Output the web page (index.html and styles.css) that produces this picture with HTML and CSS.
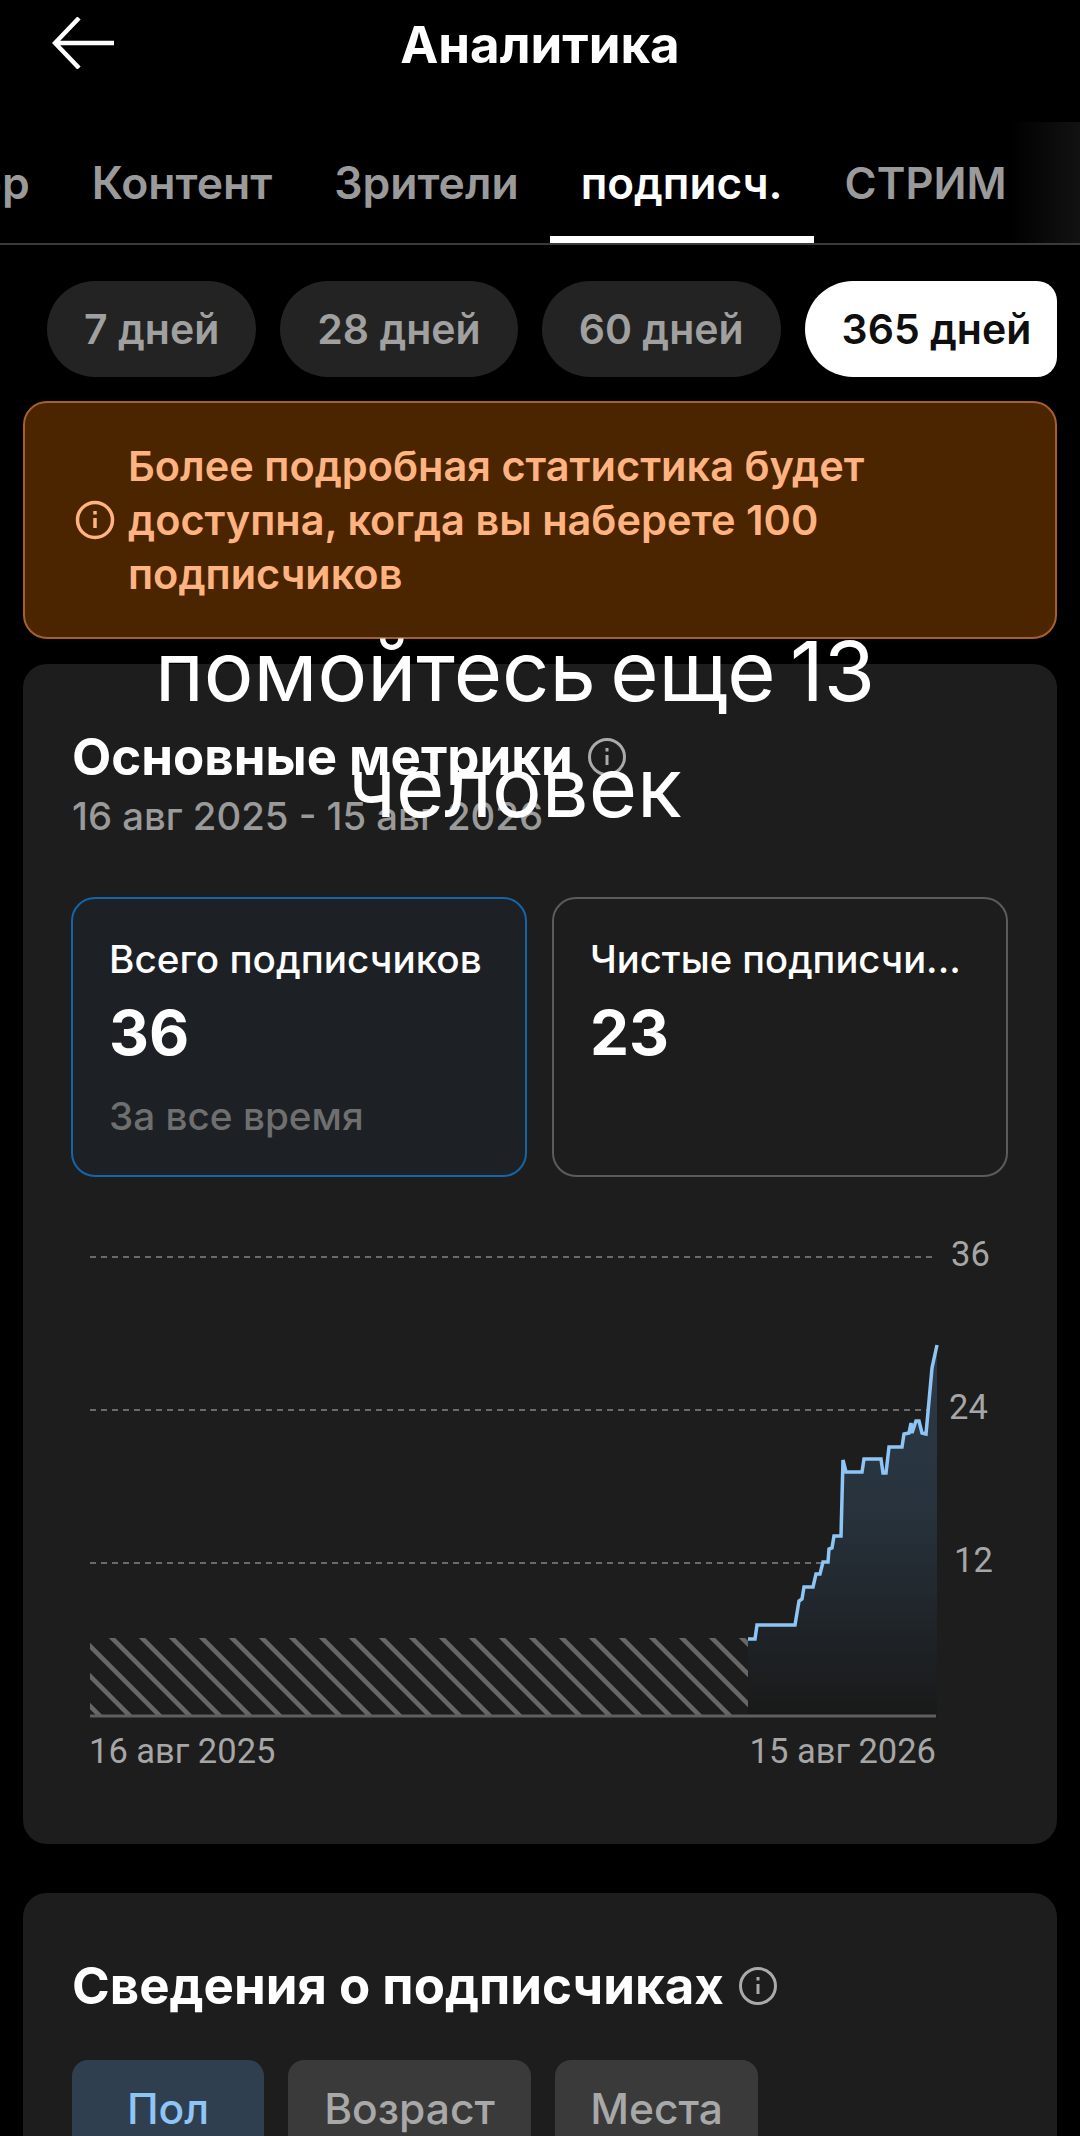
FILE: index.html
```html
<!DOCTYPE html>
<html lang="ru">
<head>
<meta charset="utf-8">
<title>Аналитика</title>
<link rel="stylesheet" href="styles.css">
</head>
<body>
<div class="page">
  <header class="topbar">
    <svg class="back" viewBox="0 0 64 52" width="64" height="52" aria-hidden="true"><path d="M62 26H3M27 1 3 26l24 25" fill="none" stroke="#fff" stroke-width="4.5"/></svg>
    <h1 class="title">Аналитика</h1>
  </header>
  <nav class="tabs">
    <span class="tab">Обзор</span>
    <span class="tab">Контент</span>
    <span class="tab">Зрители</span>
    <span class="tab tab-on">подписч.</span>
    <span class="tab tab-caps">СТРИМ</span>
    <span class="tabs-fade"></span>
  </nav>
  <div class="pills">
    <span class="pill">7 дней</span>
    <span class="pill">28 дней</span>
    <span class="pill">60 дней</span>
    <span class="pill pill-on">365 дней</span>
  </div>
  <section class="banner">
    <svg class="info info-orange" viewBox="0 0 40 40" width="40" height="40" aria-hidden="true"><circle cx="20" cy="20" r="17.5"/><path d="M20 18v10M20 11v3.5"/></svg>
    <p class="banner-text">Более подробная статистика будет доступна, когда вы наберете 100 подписчиков</p>
  </section>
  <section class="card card-metrics">
    <div class="heading">
      <h2 class="h2">Основные метрики</h2>
      <svg class="info info-gray" viewBox="0 0 40 40" width="40" height="40" aria-hidden="true"><circle cx="20" cy="20" r="17.5"/><path d="M20 18v10M20 11v3.5"/></svg>
    </div>
    <p class="range">16 авг 2025 - 15 авг 2026</p>
    <div class="metrics">
      <div class="metric metric-on">
        <div class="metric-label">Всего подписчиков</div>
        <div class="metric-value">36</div>
        <div class="metric-note">За все время</div>
      </div>
      <div class="metric">
        <div class="metric-label metric-label-cut">Чистые подписчи...</div>
        <div class="metric-value">23</div>
      </div>
    </div>
    <svg class="chart" viewBox="72 1230 936 530" width="936" height="530" role="img" aria-label="График подписчиков">
      <defs>
        <pattern id="hatch" width="30" height="30" patternUnits="userSpaceOnUse" patternTransform="translate(112 1638)">
          <path d="M-10 -10 40 40M-40 -10 10 40M20 -10 70 40" stroke="#676767" stroke-width="4.5" fill="none"/>
        </pattern>
        <linearGradient id="fill" x1="0" y1="0" x2="0" y2="1">
          <stop offset="0" stop-color="#2c3a48"/>
          <stop offset=".45" stop-color="#27323c"/>
          <stop offset="1" stop-color="#191919"/>
        </linearGradient>
      </defs>
      <g class="grid">
        <path d="M90 1257H936M90 1410H936M90 1563H936"/>
      </g>
      <rect x="90" y="1638" width="658" height="77" fill="url(#hatch)"/>
      <path fill="url(#fill)" d="M748 1639 755 1639 757 1625H795L799 1601 802 1599 804 1587H813L816 1574H820L823 1562H828L829 1549 832 1548 834 1536H841L843 1460 846 1472H862L864 1459H881L883 1473H886L889 1447H902L904 1434 909 1433 911 1423 912 1433 916 1421H919L922 1433 926 1434 932 1368 937 1345V1715H748Z"/>
      <path class="line" d="M748 1639 755 1639 757 1625H795L799 1601 802 1599 804 1587H813L816 1574H820L823 1562H828L829 1549 832 1548 834 1536H841L843 1460 846 1472H862L864 1459H881L883 1473H886L889 1447H902L904 1434 909 1433 911 1423 912 1433 916 1421H919L922 1433 926 1434 932 1368 937 1345"/>
      <path class="axis" d="M90 1716H936"/>
      <text class="tick" x="951" y="1266">36</text>
      <text class="tick" x="949" y="1419">24</text>
      <text class="tick" x="954" y="1572">12</text>
      <text class="tick" x="89" y="1763">16 авг 2025</text>
      <text class="tick" x="936" y="1763" text-anchor="end">15 авг 2026</text>
    </svg>
  </section>
  <section class="card card-details">
    <div class="heading">
      <h2 class="h2">Сведения о подписчиках</h2>
      <svg class="info info-gray" viewBox="0 0 40 40" width="40" height="40" aria-hidden="true"><circle cx="20" cy="20" r="17.5"/><path d="M20 18v10M20 11v3.5"/></svg>
    </div>
    <div class="chips">
      <span class="chip chip-on">Пол</span>
      <span class="chip">Возраст</span>
      <span class="chip">Места</span>
    </div>
  </section>
  <div class="overlay">помойтесь еще 13<br>человек</div>
</div>
</body>
</html>
```
FILE: styles.css
```css
* { box-sizing: border-box; }
html, body { margin: 0; padding: 0; background: #000; }
.page {
  position: relative;
  width: 1080px;
  height: 2136px;
  overflow: hidden;
  background: #000;
  color: #fff;
  font-family: Inter, Roboto, sans-serif;
}
h1, h2, p { margin: 0; }

.topbar { position: relative; height: 122px; display: flex; justify-content: center; padding-top: 16px; }
.back { position: absolute; left: 52px; top: 17px; }
.title { font-size: 51px; line-height: 58px; font-weight: 700; }

.tabs {
  position: relative;
  height: 123px;
  display: flex;
  border-bottom: 2px solid #3a3a3a;
  overflow: hidden;
}
.tab {
  flex: none;
  padding: 34px 31px 0;
  height: 120px;
  font-size: 44.5px;
  line-height: 54px;
  font-weight: 600;
  color: #9a9a9a;
}
.tab:first-child { margin-left: -140px; }
.tab-on { color: #fff; font-size: 44px; border-bottom: 7px solid #fff; height: 121px; }
.tab-caps { font-size: 43.5px; }
.tabs-fade {
  position: absolute;
  right: 0; top: 0; bottom: 0;
  width: 70px;
  background: linear-gradient(to right, rgba(18,18,18,0), #121212);
}

.pills { display: flex; gap: 24px; padding: 36px 0 0 47px; width: 1057px; }
.pill {
  flex: none;
  height: 96px;
  padding: 0 37px;
  border-radius: 48px;
  background: #232323;
  color: #a0a0a0;
  font-size: 41px;
  font-weight: 600;
  line-height: 96px;
  white-space: nowrap;
}
.pill-on {
  flex: 1;
  padding-right: 0;
  background: #fff;
  color: #0f0f0f;
  border-radius: 48px 20px 20px 48px;
}

.banner {
  display: flex;
  align-items: center;
  gap: 13px;
  margin: 24px 23px 0;
  height: 238px;
  padding: 0 100px 0 50px;
  background: #4a2500;
  border: 2px solid #a8602a;
  border-radius: 24px;
}
.banner-text { color: #ffb380; font-size: 41.5px; line-height: 54px; font-weight: 600; }
.info { flex: none; fill: none; stroke-width: 3.5; }
.info-orange { stroke: #ffb380; }
.info-gray { stroke: #aaa; stroke-width: 3; }

.card { margin: 0 23px; background: #1d1d1d; border-radius: 24px; padding: 0 49px; }
.card-metrics { margin-top: 25px; height: 1180px; padding-top: 67px; }
.card-details { margin-top: 49px; height: 300px; padding-top: 67px; }
.heading { display: flex; align-items: center; gap: 14px; height: 52px; }
.h2 { font-size: 51px; line-height: 52px; font-weight: 700; }
.range { font-size: 38.3px; line-height: 48px; color: #9a9a9a; margin-top: 9px; font-weight: 500; }

.metrics { display: flex; gap: 25px; margin-top: 57px; }
.metric {
  width: 456px;
  height: 280px;
  padding: 38px 36px;
  border: 2px solid #5c5c5c;
  border-radius: 24px;
}
.metric:first-child { margin-left: -1px; }
.metric-on { border-color: #1565a8; background: #1d2126; }
.metric-label { font-size: 38.7px; line-height: 44px; font-weight: 500; white-space: nowrap; }
.metric-label-cut { font-size: 38.2px; }
.metric-value { font-size: 62px; line-height: 76px; font-weight: 700; margin-top: 14px; }
.metric-note { font-size: 38.7px; line-height: 44px; color: #6f6f6f; font-weight: 500; margin-top: 23px; }

.chart { display: block; margin: 53px 0 0 0; overflow: visible; }
.grid path { stroke: #6a6a6a; stroke-width: 2; stroke-dasharray: 6 5; fill: none; }
.line { fill: none; stroke: #8ec5f5; stroke-width: 3.5; }
.axis { stroke: #5f5f5f; stroke-width: 3; fill: none; }
.tick { font-size: 34.5px; fill: #a6a6a6; font-family: Roboto, sans-serif; }

.chips { display: flex; gap: 24px; margin-top: 48px; }
.chip {
  height: 120px;
  padding: 22px 0 0;
  text-align: center;
  border-radius: 16px;
  background: #3a3a3a;
  color: #a8a8a8;
  font-size: 42.5px;
  line-height: 54px;
  font-weight: 500;
}
.chip:nth-child(1) { width: 192px; }
.chip:nth-child(2) { width: 243px; }
.chip:nth-child(3) { width: 203px; }
.chip-on { background: #2f3f50; color: #8ec5f5; }

.overlay {
  position: absolute;
  left: 0;
  top: 613px;
  width: 1030px;
  text-align: center;
  font-size: 83px;
  word-spacing: -9px;
  line-height: 116px;
  color: #fff;
}
```
